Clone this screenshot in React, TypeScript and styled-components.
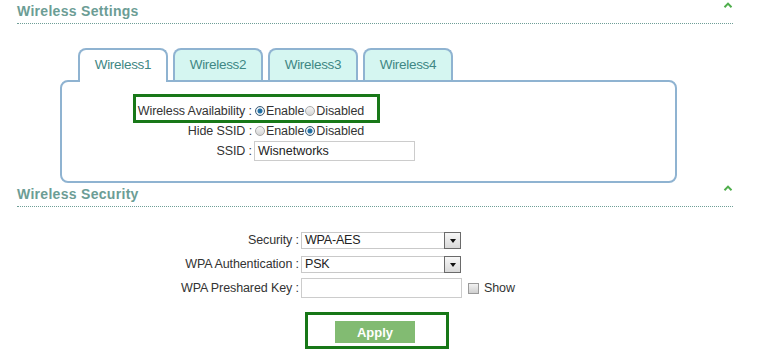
import React from "react";
import styled, { createGlobalStyle } from "styled-components";

const GlobalStyle = createGlobalStyle`
  html, body { margin: 0; padding: 0; background: #ffffff; }
  body {
    font-family: "Liberation Sans", Arial, sans-serif;
    font-size: 12.5px;
    color: #333333;
  }
`;

const Page = styled.div`
  width: 761px;
  height: 350px;
  overflow: hidden;
  position: relative;
`;

const SectionHeader = styled.div`
  display: flex;
  justify-content: space-between;
  align-items: flex-start;
  height: 23px;
  margin: 0 28px 0 17px;
  border-bottom: 1px dotted #6f9e97;
`;

const SectionTitle = styled.h2`
  margin: 0;
  padding-top: 3px;
  font-size: 14px;
  line-height: 17px;
  font-weight: bold;
  letter-spacing: 0.3px;
  color: #6c9d95;
`;

const Caret = styled.svg`
  display: block;
  margin-top: 2px;
  width: 10px;
  height: 6px;
`;

const CollapseCaret = () => (
  <Caret viewBox="0 0 10 6">
    <polyline points="1.5,5.2 5,1.6 8.5,5.2" fill="none" stroke="#4fae4c" strokeWidth="2" />
  </Caret>
);

const TabGroup = styled.div`
  margin: 24px 0 0 60px;
  width: 617px;
`;

const TabBar = styled.div`
  display: flex;
  align-items: flex-end;
  gap: 5px;
  height: 32px;
  padding-left: 18px;
`;

const Tab = styled.div<{ $active?: boolean }>`
  position: relative;
  z-index: ${(p) => (p.$active ? 1 : 0)};
  box-sizing: border-box;
  width: 90px;
  height: ${(p) => (p.$active ? 34 : 32)}px;
  margin-bottom: ${(p) => (p.$active ? -2 : 0)}px;
  padding-top: 7px;
  border: 2px solid #8fb3d1;
  border-bottom: none;
  border-radius: 8px 8px 0 0;
  background: ${(p) => (p.$active ? "#ffffff" : "#d5f6f1")};
  color: #3f8784;
  font-size: 13.5px;
  letter-spacing: -0.3px;
  line-height: 16px;
  text-align: center;
`;

const Panel = styled.div`
  box-sizing: border-box;
  height: 103px;
  padding: 18px 0 20px 0;
  border: 2px solid #8fb3d1;
  border-radius: 8px;
`;

const FormRow = styled.div<{ $h: number; $highlight?: boolean }>`
  position: relative;
  display: flex;
  align-items: center;
  height: ${(p) => p.$h}px;
  white-space: nowrap;

  &::after {
    content: "";
    display: ${(p) => (p.$highlight ? "block" : "none")};
    position: absolute;
    left: 71px;
    top: -6px;
    width: 247px;
    height: 29px;
    box-sizing: border-box;
    border: 3px solid #187818;
  }
`;

const Label = styled.div<{ $w: number }>`
  box-sizing: border-box;
  width: ${(p) => p.$w}px;
  padding-right: 2px;
  text-align: right;
  letter-spacing: -0.1px;
`;

const Option = styled.span`
  letter-spacing: -0.1px;
`;

const Radio = styled.span<{ $checked?: boolean }>`
  display: inline-block;
  box-sizing: border-box;
  width: 10px;
  height: 10px;
  margin: 0 1px 0 1px;
  border-radius: 50%;
  border: 1px solid ${(p) => (p.$checked ? "#3d5a72" : "#a9a9a9")};
  background: ${(p) =>
    p.$checked
      ? "radial-gradient(circle at 50% 50%, #1b5f8e 0, #2a7ab0 2.2px, #e4ecf2 2.8px)"
      : "linear-gradient(#f6f6f6, #d4d4d4)"};
`;

const TextBox = styled.div<{ $w: number }>`
  box-sizing: border-box;
  width: ${(p) => p.$w}px;
  height: 20px;
  padding: 0 3px;
  border: 1px solid #cccccc;
  background: #ffffff;
  line-height: 18px;
  color: #222222;
`;

const SecurityForm = styled.div`
  margin-top: 21px;
`;

const Select = styled.div`
  display: flex;
  align-items: stretch;
  box-sizing: border-box;
  width: 160px;
  height: 17px;
  border: 1px solid #c9c9c9;
  background: #ffffff;
`;

const SelectText = styled.span`
  flex: 1;
  padding-left: 3px;
  line-height: 15px;
  color: #222222;
  letter-spacing: -0.2px;
`;

const SelectArrow = styled.span`
  display: flex;
  align-items: center;
  justify-content: center;
  box-sizing: border-box;
  width: 17px;
  margin: -1px -1px -1px 0;
  border: 1px solid #6a6a6a;
  background: linear-gradient(#f7f7f7, #d9d9d9);
`;

const Triangle = styled.span`
  width: 0;
  height: 0;
  margin-top: 2px;
  border-left: 3.5px solid transparent;
  border-right: 3.5px solid transparent;
  border-top: 4px solid #111111;
`;

const CheckBox = styled.span`
  display: inline-block;
  box-sizing: border-box;
  width: 11px;
  height: 11px;
  margin: 0 5px 0 6px;
  border: 1px solid #9a9a9a;
  background: linear-gradient(#f2f2f2, #cfcfcf);
`;

const ApplyBox = styled.div`
  box-sizing: border-box;
  width: 144px;
  height: 37px;
  margin: 12px 0 0 305px;
  padding: 6px 0 0 27px;
  border: 3px solid #177717;
`;

const ApplyButton = styled.button`
  display: block;
  width: 80px;
  height: 22px;
  padding: 0;
  border: none;
  background: #82bb72;
  color: #ffffff;
  font-family: "Liberation Sans", Arial, sans-serif;
  font-size: 13px;
  font-weight: bold;
`;

const DropDown = ({ value }: { value: string }) => (
  <Select>
    <SelectText>{value}</SelectText>
    <SelectArrow>
      <Triangle />
    </SelectArrow>
  </Select>
);

export default function App() {
  return (
    <Page>
      <GlobalStyle />
      <SectionHeader>
        <SectionTitle>Wireless Settings</SectionTitle>
        <CollapseCaret />
      </SectionHeader>

      <TabGroup>
        <TabBar>
          <Tab $active>Wireless1</Tab>
          <Tab>Wireless2</Tab>
          <Tab>Wireless3</Tab>
          <Tab>Wireless4</Tab>
        </TabBar>
        <Panel>
          <FormRow $h={21} $highlight>
            <Label $w={192}>Wireless Availability :</Label>
            <Radio $checked />
            <Option>Enable</Option>
            <Radio />
            <Option>Disabled</Option>
          </FormRow>
          <FormRow $h={20}>
            <Label $w={192}>Hide SSID :</Label>
            <Radio />
            <Option>Enable</Option>
            <Radio $checked />
            <Option>Disabled</Option>
          </FormRow>
          <FormRow $h={20}>
            <Label $w={192}>SSID :</Label>
            <TextBox $w={161}>Wisnetworks</TextBox>
          </FormRow>
        </Panel>
      </TabGroup>

      <SectionHeader>
        <SectionTitle>Wireless Security</SectionTitle>
        <CollapseCaret />
      </SectionHeader>

      <SecurityForm>
        <FormRow $h={24}>
          <Label $w={301}>Security :</Label>
          <DropDown value="WPA-AES" />
        </FormRow>
        <FormRow $h={24}>
          <Label $w={301}>WPA Authentication :</Label>
          <DropDown value="PSK" />
        </FormRow>
        <FormRow $h={24}>
          <Label $w={301}>WPA Preshared Key :</Label>
          <TextBox $w={161} />
          <CheckBox />
          <Option>Show</Option>
        </FormRow>
      </SecurityForm>

      <ApplyBox>
        <ApplyButton>Apply</ApplyButton>
      </ApplyBox>
    </Page>
  );
}
